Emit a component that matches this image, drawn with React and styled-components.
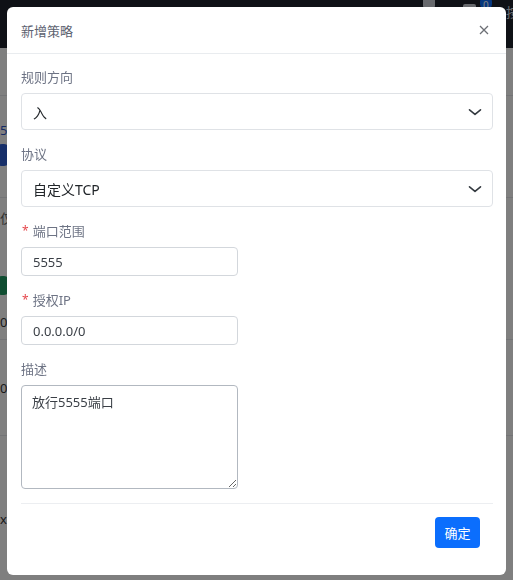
import React from 'react'
import styled, { createGlobalStyle } from 'styled-components'

const GlobalStyle = createGlobalStyle`
  html, body {
    margin: 0;
    padding: 0;
    background: #ffffff;
    font-family: "Noto Sans", "Noto Sans CJK SC", sans-serif;
    overflow: hidden;
  }
  * {
    box-sizing: border-box;
  }
`

/* page behind the dialog */

const Page = styled.div`
  width: 513px;
  height: 580px;
  display: flex;
  flex-direction: column;
  overflow: hidden;
`

const Navbar = styled.div`
  height: 48px;
  flex-shrink: 0;
  background: #1f232d;
  display: flex;
  justify-content: flex-end;
  align-items: flex-start;
  gap: 14px;
`

const NavIcon = styled.div`
  width: ${p => p.$w || 16}px;
  height: 14px;
  margin-top: ${p => p.$top || 4}px;
  margin-right: ${p => p.$gap || 0}px;
  background: #cfd3da;
  border-radius: 2px;
`

const Badge = styled.div`
  width: 12px;
  height: 14px;
  margin-top: -4px;
  margin-left: -10px;
  background: #0d6efd;
  color: #fff;
  border-radius: 6px;
  font-size: 10px;
  text-align: center;
  line-height: 18px;
`

const NavText = styled.div`
  color: #d7dbe2;
  font-size: 13px;
  margin-top: 2px;
  margin-right: -6px;
`

const Content = styled.div`
  display: flex;
  flex-direction: column;
`

const Row = styled.div`
  height: ${p => p.$h}px;
  flex-shrink: 0;
  border-bottom: 1px solid ${p => (p.$line ? '#e6e8ec' : 'transparent')};
  display: flex;
  align-items: ${p => (p.$top ? 'flex-start' : 'center')};
  padding-top: ${p => p.$top || 0}px;
  padding-left: ${p => p.$indent || 0}px;
  font-size: 13px;
  line-height: 18px;
  color: ${p => p.$color || '#333'};
`

const Pill = styled.div`
  width: 14px;
  height: ${p => p.$h || 20}px;
  border-radius: 6px;
  background: ${p => p.$bg};
  margin-left: -4px;
`

/* dialog */

const Overlay = styled.div`
  position: fixed;
  inset: 0;
  background: rgba(0, 0, 0, 0.5);
  padding: 7px 7px 5px 7px;
  display: flex;
  align-items: flex-start;
`

const Modal = styled.div`
  width: 499px;
  height: 568px;
  background: #fff;
  border-radius: 6px;
  display: flex;
  flex-direction: column;
`

const Header = styled.div`
  height: 47px;
  border-bottom: 1px solid #e9ecef;
  display: flex;
  align-items: center;
  justify-content: space-between;
  padding: 0 14px 0 14px;
`

const Title = styled.div`
  font-size: 13px;
  color: #5d6270;
`

const Close = styled.div`
  width: 16px;
  height: 16px;
  display: flex;
  align-items: center;
  justify-content: center;
  color: #6c6f75;
`

const Body = styled.div`
  padding: 13px 13px 0 14px;
  display: flex;
  flex-direction: column;
  gap: 14px;
`

const Group = styled.div`
  display: flex;
  flex-direction: column;
  gap: 6px;
`

const Label = styled.div`
  font-size: 13px;
  line-height: 20px;
  color: #6d7384;
  display: flex;
  align-items: center;
  gap: 4px;
`

const Required = styled.span`
  color: #e5484d;
  font-size: 12px;
  padding-left: 1px;
`

const Select = styled.div`
  height: 37px;
  width: 100%;
  border: 1px solid #dfe2e6;
  border-radius: 4px;
  display: flex;
  align-items: center;
  justify-content: space-between;
  padding: 0 9px 0 11px;
  font-size: 14px;
  color: #212529;
`

const Input = styled.input`
  width: 217px;
  height: 29px;
  border: 1px solid #d3d7dc;
  border-radius: 4px;
  padding: 0 11px;
  font-family: inherit;
  font-size: 13px;
  color: #3a3f46;
  outline: none;
`

const TextArea = styled.textarea`
  width: 217px;
  height: 104px;
  border: 1px solid #b2b8c0;
  border-radius: 4px;
  padding: 6px 10px;
  font-family: inherit;
  font-size: 13px;
  line-height: 20px;
  color: #3a3f46;
  outline: none;
  resize: both;
`

const Footer = styled.div`
  margin: 14px 13px 0 14px;
  border-top: 1px solid #eceef1;
  padding-top: 13px;
  display: flex;
  justify-content: flex-end;
  padding-right: 13px;
`

const Button = styled.button`
  width: 45px;
  height: 31px;
  border: none;
  border-radius: 4px;
  background: #0b6efd;
  color: #fff;
  font-family: inherit;
  font-size: 13px;
  padding: 0;
  cursor: pointer;
`

const Chevron = () => (
  <svg width="16" height="16" viewBox="0 0 16 16" fill="none">
    <path d="M2.5 5.8l5.5 4.6 5.5-4.6" stroke="#343a40" strokeWidth="1.6" strokeLinecap="round" strokeLinejoin="round" />
  </svg>
)

const App = () => {
  return (
    <>
      <GlobalStyle />
      <Page>
        <Navbar>
          <NavIcon $w={12} $top={-6} $gap={14} />
          <NavIcon $w={13} $top={0} />
          <Badge>0</Badge>
          <NavText>按</NavText>
        </Navbar>
        <Content>
          <Row $h={48} $line />
          <Row $h={22} />
          <Row $h={24} $color="#2b55c9">57</Row>
          <Row $h={26}><Pill $bg="#2f5fd3" $h={22} /></Row>
          <Row $h={30} $line />
          <Row $h={40} $color="#666">仅</Row>
          <Row $h={30} />
          <Row $h={36}><Pill $bg="#1f9a63" $h={19} /></Row>
          <Row $h={36} $line>0</Row>
          <Row $h={96} $line>0</Row>
          <Row $h={134} $top={74}>x</Row>
          <Row $h={20} $top={5} $indent={20} $color="#1f2a55">avrous</Row>
        </Content>
      </Page>

      <Overlay>
        <Modal>
          <Header>
            <Title>新增策略</Title>
            <Close>
              <svg width="10" height="10" viewBox="0 0 10 10">
                <path d="M1 1l8 8M9 1l-8 8" stroke="currentColor" strokeWidth="1.3" />
              </svg>
            </Close>
          </Header>
          <Body>
            <Group>
              <Label>规则方向</Label>
              <Select>
                <span>入</span>
                <Chevron />
              </Select>
            </Group>
            <Group>
              <Label>协议</Label>
              <Select>
                <span>自定义TCP</span>
                <Chevron />
              </Select>
            </Group>
            <Group>
              <Label><Required>*</Required>端口范围</Label>
              <Input defaultValue="5555" />
            </Group>
            <Group>
              <Label><Required>*</Required>授权IP</Label>
              <Input defaultValue="0.0.0.0/0" />
            </Group>
            <Group>
              <Label>描述</Label>
              <TextArea defaultValue="放行5555端口" />
            </Group>
          </Body>
          <Footer>
            <Button>确定</Button>
          </Footer>
        </Modal>
      </Overlay>
    </>
  )
}

export default App
